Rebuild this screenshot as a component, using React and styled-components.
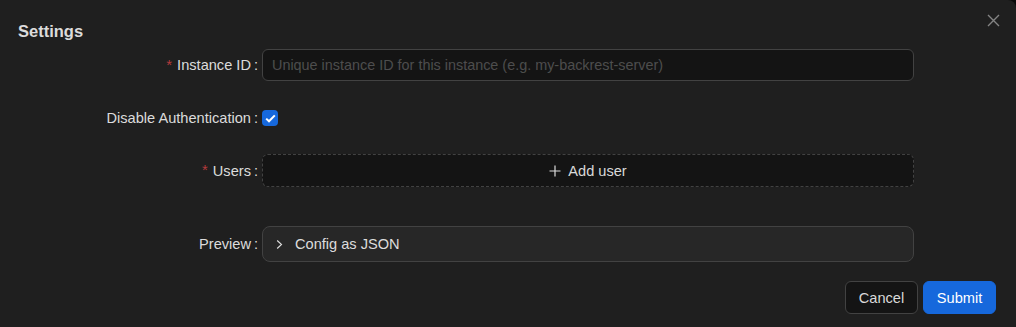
import styled, { createGlobalStyle } from "styled-components";

const GlobalStyle = createGlobalStyle`
  html, body {
    margin: 0;
    padding: 0;
    background: #0a0a0a;
  }
  body {
    font-family: "Liberation Sans", Arial, sans-serif;
    font-size: 14.6px;
    color: rgba(255, 255, 255, 0.85);
  }
`;

const Modal = styled.div`
  position: relative;
  width: 1016px;
  height: 327px;
  box-sizing: border-box;
  background: #1f1f1f;
  border-top-right-radius: 8px;
  padding: 20px 20px 0 18px;
`;

const Title = styled.div`
  font-size: 16.5px;
  font-weight: 700;
  line-height: 22px;
  color: rgba(255, 255, 255, 0.85);
`;

const Close = styled.button`
  position: absolute;
  top: 12px;
  right: 15px;
  width: 16px;
  height: 16px;
  padding: 0;
  border: none;
  background: transparent;
  display: flex;
  align-items: center;
  justify-content: center;
  cursor: pointer;
`;

const Form = styled.div`
  display: flex;
  flex-direction: column;
`;

const Row = styled.div`
  display: grid;
  grid-template-columns: 244px 652px;
  align-items: center;
  height: ${({ h }) => h}px;
  margin-top: ${({ mt }) => mt}px;
`;

const Label = styled.label`
  display: flex;
  justify-content: flex-end;
  align-items: center;
  padding-right: 4px;
  white-space: nowrap;
  color: rgba(255, 255, 255, 0.85);

  &::after {
    content: ":";
    margin-left: 3px;
  }
`;

const Star = styled.span`
  color: #b33a3c;
  margin-right: 5px;
  font-size: 15px;
  position: relative;
  top: -1px;
`;

const Input = styled.input`
  box-sizing: border-box;
  width: 100%;
  height: 32px;
  padding: 4px 9px;
  border: 1px solid #424242;
  border-radius: 6px;
  background: #141414;
  color: rgba(255, 255, 255, 0.85);
  font-family: inherit;
  font-size: 14.4px;
  outline: none;

  &::placeholder {
    color: rgba(255, 255, 255, 0.25);
  }
`;

const Check = styled.span`
  width: 16px;
  height: 16px;
  border-radius: 4px;
  background: #1668dc;
  display: flex;
  align-items: center;
  justify-content: center;
`;

const DashedButton = styled.button`
  box-sizing: border-box;
  width: 100%;
  height: 33px;
  border: 1px dashed #424242;
  border-radius: 6px;
  background: #141414;
  color: rgba(255, 255, 255, 0.85);
  font-family: inherit;
  font-size: 14.6px;
  display: flex;
  align-items: center;
  justify-content: center;
  gap: 7px;
  cursor: pointer;
`;

const Collapse = styled.div`
  box-sizing: border-box;
  width: 100%;
  height: 36px;
  border: 1px solid #424242;
  border-radius: 8px;
  background: rgba(255, 255, 255, 0.04);
  display: flex;
  align-items: center;
  padding-left: 13px;
  gap: 12px;
  color: rgba(255, 255, 255, 0.85);
`;

const Footer = styled.div`
  display: flex;
  justify-content: flex-end;
  gap: 5px;
  margin-top: 19px;
`;

const Button = styled.button`
  box-sizing: border-box;
  height: 33px;
  width: 73px;
  border-radius: 6px;
  font-family: inherit;
  font-size: 14.6px;
  cursor: pointer;
  border: 1px solid ${({ primary }) => (primary ? "#1668dc" : "#424242")};
  background: ${({ primary }) => (primary ? "#1668dc" : "#141414")};
  color: ${({ primary }) => (primary ? "#fff" : "rgba(255, 255, 255, 0.85)")};
`;

export default function App() {
  return (
    <>
      <GlobalStyle />
      <Modal>
        <Title>Settings</Title>
        <Close aria-label="close">
          <svg width="13" height="13" viewBox="0 0 13 13">
            <path d="M1 1L12 12M12 1L1 12" stroke="rgba(255,255,255,0.45)" strokeWidth="1.4" />
          </svg>
        </Close>
        <Form>
          <Row h={32} mt={7}>
            <Label><Star>*</Star>Instance ID</Label>
            <Input placeholder="Unique instance ID for this instance (e.g. my-backrest-server)" />
          </Row>
          <Row h={32} mt={21}>
            <Label>Disable Authentication</Label>
            <Check>
              <svg width="11" height="9" viewBox="0 0 11 9">
                <path d="M1.2 4.6L4 7.3L9.8 1.4" fill="none" stroke="#fff" strokeWidth="2" />
              </svg>
            </Check>
          </Row>
          <Row h={33} mt={20}>
            <Label><Star>*</Star>Users</Label>
            <DashedButton>
              <svg width="12" height="12" viewBox="0 0 12 12">
                <path d="M6 0.5V11.5M0.5 6H11.5" stroke="rgba(255,255,255,0.85)" strokeWidth="1.2" />
              </svg>
              Add user
            </DashedButton>
          </Row>
          <Row h={36} mt={39}>
            <Label>Preview</Label>
            <Collapse>
              <svg width="7" height="11" viewBox="0 0 7 11">
                <path d="M1.2 1.5L5.5 5.5L1.2 9.5" fill="none" stroke="rgba(255,255,255,0.85)" strokeWidth="1.1" />
              </svg>
              Config as JSON
            </Collapse>
          </Row>
        </Form>
        <Footer>
          <Button>Cancel</Button>
          <Button primary>Submit</Button>
        </Footer>
      </Modal>
    </>
  );
}
